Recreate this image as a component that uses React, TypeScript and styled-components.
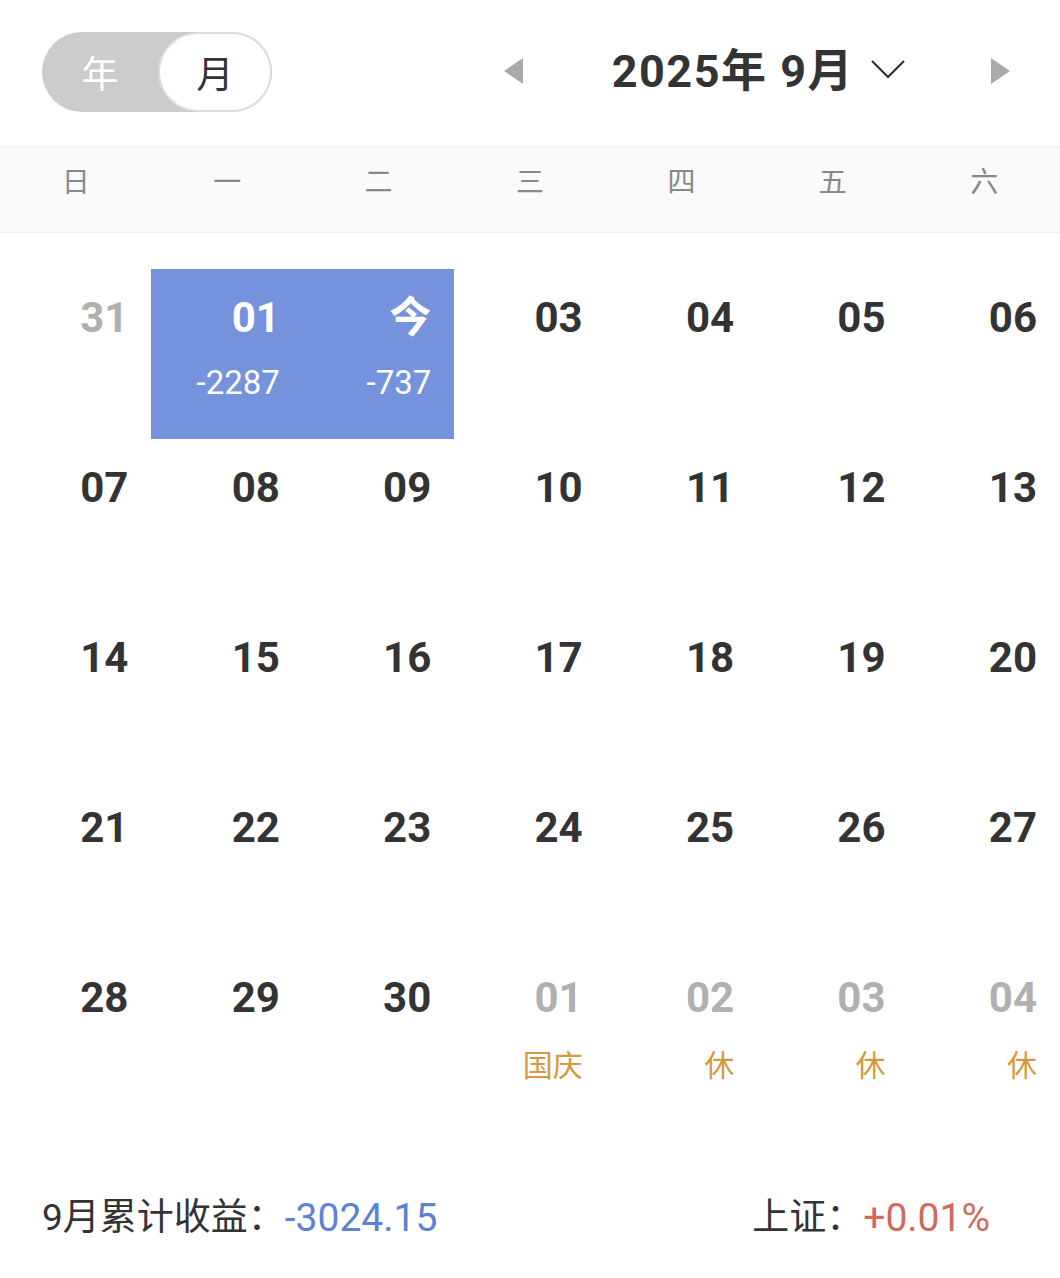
import React from 'react'
import styled, { createGlobalStyle } from 'styled-components'

const GlobalStyle = createGlobalStyle`
  html, body {
    margin: 0;
    padding: 0;
    background: #ffffff;
    font-family: Roboto, "Noto Sans CJK SC", "Noto Sans", sans-serif;
  }
`

const Page = styled.div`
  width: 1060px;
  min-height: 1278px;
  background: #ffffff;
`

const TopBar = styled.div`
  height: 146px;
  display: flex;
  align-items: center;
  justify-content: space-between;
  padding: 0 50px 0 42px;
  box-sizing: border-box;
`

const Toggle = styled.div`
  width: 230px;
  height: 80px;
  border-radius: 40px;
  background: #cccccc;
  display: flex;
  margin-bottom: 2px;
`

const Segment = styled.div<{ $active?: boolean }>`
  flex: ${p => (p.$active ? '0 0 114px' : '1')};
  display: flex;
  align-items: center;
  justify-content: center;
  border-radius: 40px;
  box-sizing: border-box;
  font-family: "Noto Sans CJK SC", sans-serif;
  font-size: 37px;
  color: ${p => (p.$active ? '#333333' : '#ffffff')};
  background: ${p => (p.$active ? '#ffffff' : 'transparent')};
  border: ${p => (p.$active ? '2px solid #dddddd' : 'none')};
`

const Nav = styled.div`
  display: flex;
  align-items: center;
`

const ArrowButton = styled.div<{ $gap: number }>`
  display: flex;
  align-items: center;
  margin: 0 ${p => p.$gap}px 4px 0;
`

const Title = styled.div`
  font-size: 45px;
  font-weight: 700;
  color: #333333;
  letter-spacing: 1.5px;
  margin: 0 17px 12px 0;
`

const Chevron = styled.svg`
  margin: 0 85px 8px 0;
`

const WeekBar = styled.div`
  display: grid;
  grid-template-columns: repeat(7, 1fr);
  height: 85px;
  background: #fafafa;
  border-top: 1px solid #f0f0f0;
  border-bottom: 1px solid #f0f0f0;
`

const WeekDay = styled.div`
  display: flex;
  justify-content: center;
  padding-top: 13px;
  font-family: "Noto Sans CJK SC", sans-serif;
  font-size: 28px;
  line-height: 40px;
  color: #888888;
`

const Grid = styled.div`
  display: grid;
  grid-template-columns: repeat(7, 1fr);
  grid-auto-rows: 170px;
  padding-top: 36px;
`

const Cell = styled.div<{ $selected?: boolean }>`
  display: flex;
  flex-direction: column;
  align-items: flex-end;
  padding: 29px 23px 0 0;
  box-sizing: border-box;
  background: ${p => (p.$selected ? '#7592dc' : 'transparent')};
`

const DayNum = styled.div<{ $tone: 'normal' | 'muted' | 'light' }>`
  font-size: 42px;
  line-height: 40px;
  font-weight: 700;
  color: ${p => (p.$tone === 'light' ? '#ffffff' : p.$tone === 'muted' ? '#b0b0b0' : '#333333')};
`

const SubLabel = styled.div<{ $kind: 'profit' | 'holiday' }>`
  margin-top: 27px;
  line-height: 36px;
  font-size: ${p => (p.$kind === 'profit' ? '33px' : '30px')};
  font-family: ${p => (p.$kind === 'profit' ? 'Roboto, sans-serif' : '"Noto Sans CJK SC", sans-serif')};
  color: ${p => (p.$kind === 'profit' ? '#ffffff' : '#d4993c')};
`

const Footer = styled.div`
  display: flex;
  justify-content: space-between;
  align-items: center;
  padding: 75px 70px 0 42px;
  font-size: 37px;
  line-height: 48px;
  color: #333333;
`

const Stat = styled.div`
  display: flex;
  align-items: center;
`

const StatValue = styled.span<{ $color: string }>`
  font-size: 39px;
  color: ${p => p.$color};
`

type Day = {
  label: string
  tone: 'normal' | 'muted' | 'light'
  selected?: boolean
  sub?: string
  subKind?: 'profit' | 'holiday'
}

const weekDays = ['日', '一', '二', '三', '四', '五', '六']

const days: Day[] = [
  { label: '31', tone: 'muted' },
  { label: '01', tone: 'light', selected: true, sub: '-2287', subKind: 'profit' },
  { label: '今', tone: 'light', selected: true, sub: '-737', subKind: 'profit' },
  ...Array.from({ length: 28 }, (_, i) => ({
    label: String(i + 3).padStart(2, '0'),
    tone: 'normal' as const,
  })),
  { label: '01', tone: 'muted', sub: '国庆', subKind: 'holiday' },
  { label: '02', tone: 'muted', sub: '休', subKind: 'holiday' },
  { label: '03', tone: 'muted', sub: '休', subKind: 'holiday' },
  { label: '04', tone: 'muted', sub: '休', subKind: 'holiday' },
]

export default function App() {
  return (
    <Page>
      <GlobalStyle />
      <TopBar>
        <Toggle>
          <Segment>年</Segment>
          <Segment $active>月</Segment>
        </Toggle>
        <Nav>
          <ArrowButton $gap={88}>
            <svg width="20" height="28" viewBox="0 0 20 28">
              <polygon points="0,14 19,1 19,27" fill="#aaaaaa" />
            </svg>
          </ArrowButton>
          <Title>2025年 9月</Title>
          <Chevron width="34" height="20" viewBox="0 0 34 20">
            <polyline points="1,2 17,18 33,2" fill="none" stroke="#333333" strokeWidth="2.2" />
          </Chevron>
          <ArrowButton $gap={0}>
            <svg width="20" height="28" viewBox="0 0 20 28">
              <polygon points="20,14 1,1 1,27" fill="#aaaaaa" />
            </svg>
          </ArrowButton>
        </Nav>
      </TopBar>

      <WeekBar>
        {weekDays.map(d => (
          <WeekDay key={d}>{d}</WeekDay>
        ))}
      </WeekBar>

      <Grid>
        {days.map((d, i) => (
          <Cell key={i} $selected={d.selected}>
            <DayNum $tone={d.tone}>{d.label}</DayNum>
            {d.sub && <SubLabel $kind={d.subKind!}>{d.sub}</SubLabel>}
          </Cell>
        ))}
      </Grid>

      <Footer>
        <Stat>
          9月累计收益：<StatValue $color="#5b82d4">-3024.15</StatValue>
        </Stat>
        <Stat>
          上证：<StatValue $color="#d2695c">+0.01%</StatValue>
        </Stat>
      </Footer>
    </Page>
  )
}
